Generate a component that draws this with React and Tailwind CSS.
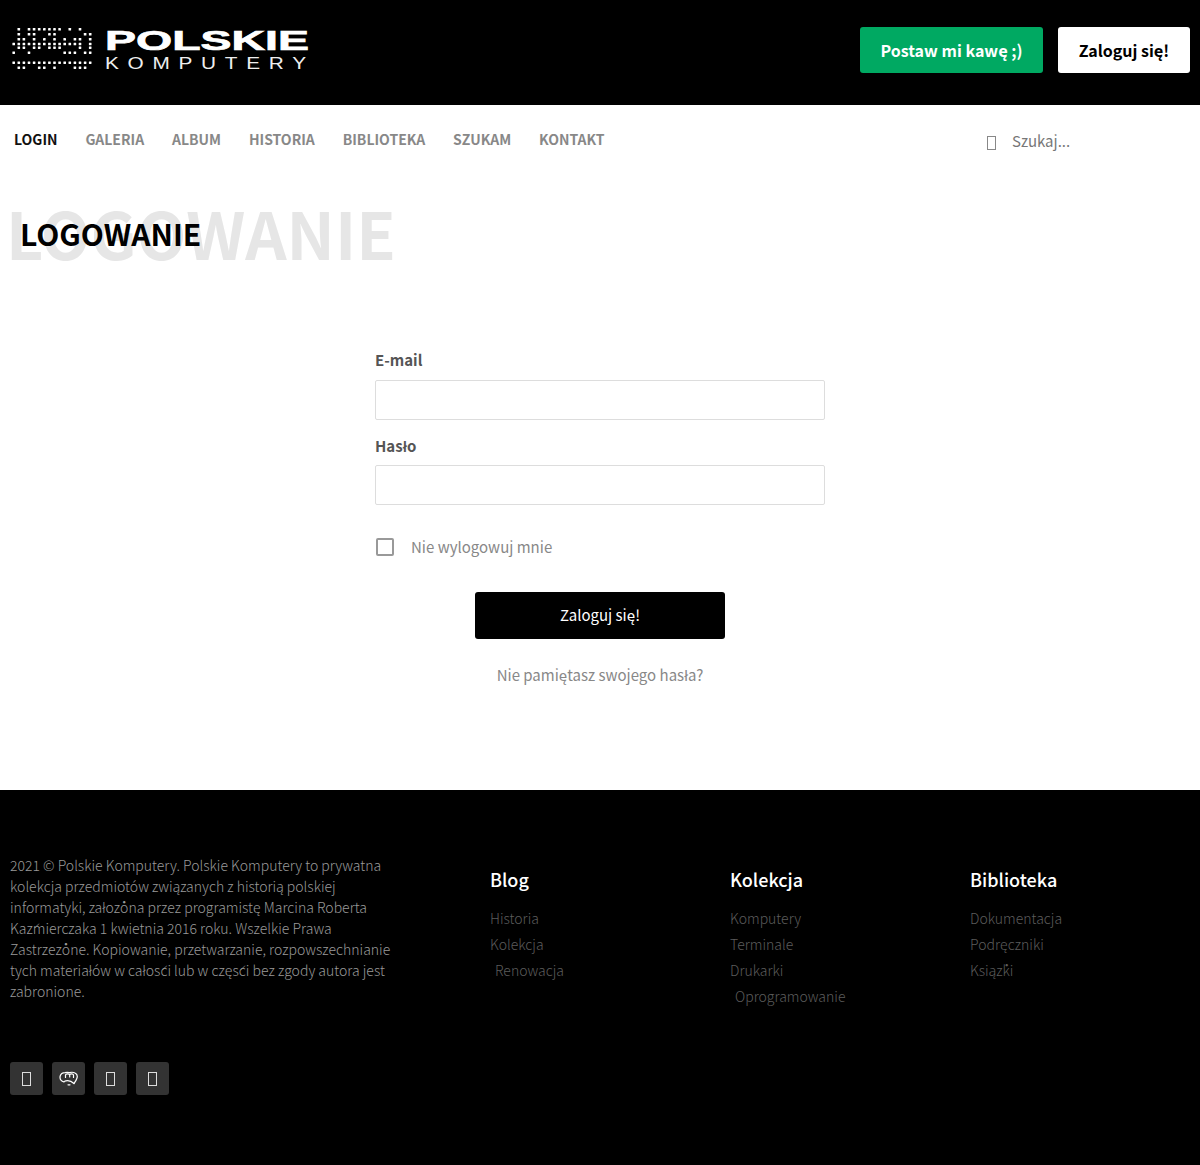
const F = "font-['Noto_Sans_CJK_JP','Noto_Sans',sans-serif]";

const dotRows = [
  [0, [1, 3, 4, 5, 6, 7, 8, 9, 11, 13]],
  [5, [1, 3, 4, 7, 8, 14, 15]],
  [10, [1, 2, 4, 6, 8, 10, 12, 13, 15]],
  [14.7, [0, 1, 2, 3, 4, 5, 6, 7, 8, 9, 10, 11, 12, 13, 15]],
  [18.4, [1, 2, 4, 5, 7, 8, 9, 13, 15]],
  [23.4, [0, 3, 10, 11, 12, 14, 15]],
  [33.4, [0, 1, 2, 3, 4, 5, 6, 7, 8, 9, 10, 11, 12, 13, 14, 15]],
  [38.4, [1, 2, 5, 6, 8, 12, 13, 14]],
];

function LogoDots() {
  return (
    <svg width="82" height="42" viewBox="0 0 82 42" className="block">
      {dotRows.map(([y, cols]) =>
        cols.map((x) => (
          <rect key={x + "-" + y} x={0.4 + x * 5.1} y={y} width="2.6" height="2.6" rx="0.4" fill="#fff" />
        ))
      )}
    </svg>
  );
}

function Logo() {
  return (
    <div className="flex items-start gap-[11px]">
      <LogoDots />
      <div className="flex w-[202px] flex-col pt-[1px]">
        <div className="origin-left scale-x-[1.66] whitespace-nowrap font-['Liberation_Sans'] text-[28px] leading-[24px] font-bold text-white [-webkit-text-stroke:0.7px_#fff]">
          POLSKIE
        </div>
        <div className="mt-[3px] origin-left scale-x-[1.3] whitespace-nowrap font-['Liberation_Sans'] text-[16px] leading-[16px] font-normal tracking-[6.7px] text-[#eee]">
          KOMPUTERY
        </div>
      </div>
    </div>
  );
}

const nav = ["GALERIA", "ALBUM", "HISTORIA", "BIBLIOTEKA", "SZUKAM", "KONTAKT"];

function FooterCol({ title, links, className }) {
  return (
    <div className={className}>
      <h4 className="text-[18px] leading-[30px] font-medium text-white">{title}</h4>
      <ul className="mt-[11px] text-[14px] leading-[26px] font-light text-[#5c5c5c]">
        {links.map(([l, indent]) => (
          <li key={l} className={indent ? "pl-[5px]" : ""}>{l}</li>
        ))}
      </ul>
    </div>
  );
}

function Swirl() {
  return (
    <svg width="19" height="15" viewBox="0 0 19 15" fill="none" stroke="#fff" strokeWidth="1.2" strokeLinecap="round">
      <path d="M5 11C2 10 0.6 7.5 1.2 5C1.8 2.6 3.8 1.6 6 1.6C7.4 1.4 8.8 1.4 10.5 1.6C12 1.2 14.5 1.2 16 2C18 3 18.6 5.5 17.8 7.5C17.2 9.5 16 11 15 12.5" />
      <path d="M5 10.5C7.5 9.2 11.5 9.2 15 12.5" />
      <path d="M6.5 6.5V3.8C6.8 2.6 9.8 2.4 10.7 3.6V6M14.5 6.5V3.8C14.2 2.6 11.5 2.4 10.7 3.6" />
      <path d="M9 13.8H11" />
    </svg>
  );
}

export default function App() {
  return (
    <div className={F + " flex min-h-[1165px] flex-col bg-white"}>
      <header className="flex h-[105px] items-center justify-between bg-black pr-[10px] pb-[6px] pl-[12px]">
        <Logo />
        <div className="flex items-center gap-[15px]">
          <button className="h-[46px] w-[183px] rounded-[3px] bg-[#00a962] text-[16px] font-bold text-white">Postaw mi kawę ;)</button>
          <button className="h-[46px] w-[132px] rounded-[3px] bg-white text-[16px] font-bold text-black">Zaloguj się!</button>
        </div>
      </header>

      <nav className="flex h-[72px] items-start justify-between pt-[22px] pl-[14px]">
        <div className="flex gap-[27.9px] text-[14px] leading-[24px] font-semibold text-[#888]">
          <a className="font-bold text-[#111]">LOGIN</a>
          {nav.map((n) => <a key={n}>{n}</a>)}
        </div>
        <div className="mt-[2px] flex w-[213px] items-center gap-[16px] text-[15px] leading-[24px] text-[#777]">
          <span className="mt-[3px] h-[14px] w-[9px] border border-[#888]" />
          <span>Szukaj...</span>
        </div>
      </nav>

      <div className="relative mt-[22px] h-[70px] pl-[20px]">
        <div className="absolute top-[-12px] left-[6px] text-[64.5px] leading-[90px] font-bold whitespace-nowrap text-[#e6e6e6]">LOGOWANIE</div>
        <h1 className="relative pt-[11px] text-[30px] leading-[46px] font-semibold text-black">LOGOWANIE</h1>
      </div>

      <main className="mx-auto mt-[79px] flex w-[450px] flex-col">
        <label className="text-[15px] leading-[24px] font-semibold text-[#555]">E-mail</label>
        <input className="mt-[8px] h-[40px] rounded-[2px] border border-[#ddd] bg-white" />
        <label className="mt-[14px] text-[15px] leading-[24px] font-semibold text-[#555]">Hasło</label>
        <input className="mt-[7px] h-[40px] rounded-[2px] border border-[#ddd] bg-white" />
        <div className="mt-[30px] flex items-center pl-[1px]">
          <span className="h-[18px] w-[18px] rounded-[2px] border-2 border-[#999]" />
          <span className="ml-[17px] text-[15px] leading-[24px] text-[#888]">Nie wylogowuj mnie</span>
        </div>
        <button className="mx-auto mt-[33px] h-[47px] w-[250px] rounded-[3px] bg-black text-[15px] text-white">Zaloguj się!</button>
        <a className="mt-[24px] text-center text-[15px] leading-[24px] text-[#888]">Nie pamiętasz swojego hasła?</a>
      </main>

      <footer className="mt-[103px] flex flex-1 bg-black px-[10px] pt-[65px]">
        <div className="w-[480px] shrink-0">
          <p className="w-[390px] text-[14px] leading-[21px] font-light text-[#999]">
            2021 © Polskie Komputery. Polskie Komputery to prywatna kolekcja przedmiotów związanych z historią polskiej informatyki, założona przez programistę Marcina Roberta Kaźmierczaka 1 kwietnia 2016 roku. Wszelkie Prawa Zastrzeżone. Kopiowanie, przetwarzanie, rozpowszechnianie tych materiałów w całości lub w części bez zgody autora jest zabronione.
          </p>
          <div className="mt-[60px] flex gap-[9px]">
            {["facebook", "swirl", "instagram", "youtube"].map((c) => (
              <span key={c} aria-label={c} className="flex h-[33px] w-[33px] items-center justify-center rounded-[3px] bg-[#333]">
                {c === "swirl" ? <Swirl /> : <span className="h-[14px] w-[9px] border border-[#ddd]" />}
              </span>
            ))}
          </div>
        </div>
        <div className="flex pt-[9px]">
          <FooterCol className="w-[240px]" title="Blog" links={[["Historia"], ["Kolekcja"], ["Renowacja", 1]]} />
          <FooterCol className="w-[240px]" title="Kolekcja" links={[["Komputery"], ["Terminale"], ["Drukarki"], ["Oprogramowanie", 1]]} />
          <FooterCol className="w-[220px]" title="Biblioteka" links={[["Dokumentacja"], ["Podręczniki"], ["Książki"]]} />
        </div>
      </footer>
    </div>
  );
}
